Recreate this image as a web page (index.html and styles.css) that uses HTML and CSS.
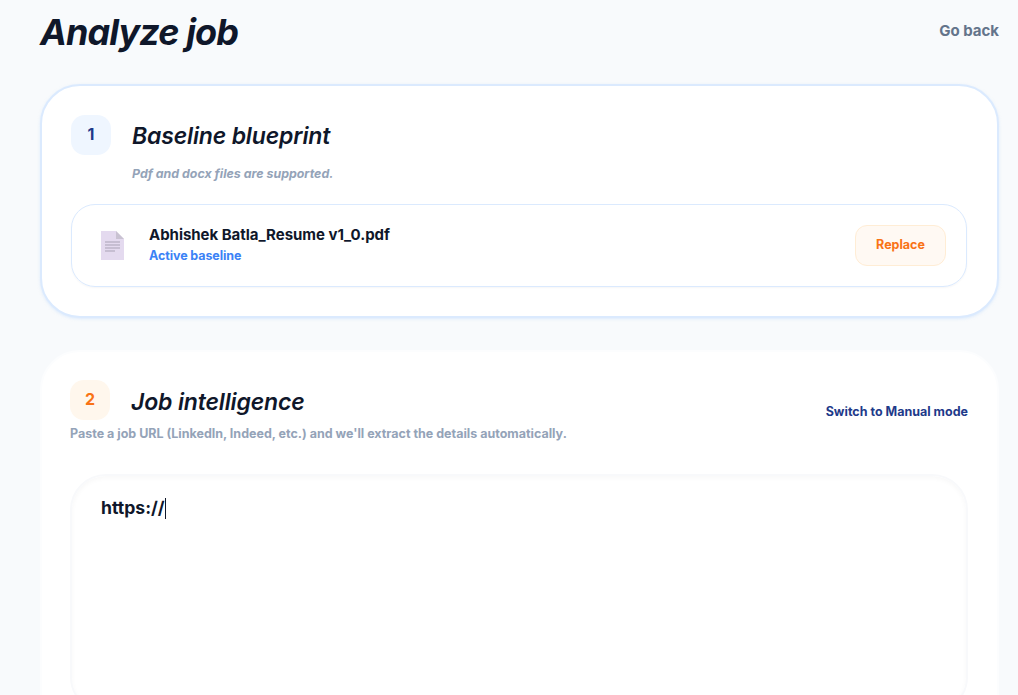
FILE: index.html
```html
<!DOCTYPE html>
<html lang="en">
  <head>
    <meta charset="UTF-8" />
    <meta name="viewport" content="width=device-width, initial-scale=1.0" />
    <link rel="stylesheet" href="styles.css">
    <title>Analyze job</title>
  </head>
  <body class="analyze-page">
    <header class="page-head">
      <h1 class="page-head__title">Analyze job</h1>
      <a class="page-head__back" href="#">Go back</a>
    </header>
    <section class="card card--active">
      <div class="step">
        <span class="step__num">1</span>
        <h2 class="step__title">Baseline blueprint</h2>
      </div>
      <p class="step__hint">Pdf and docx files are supported.</p>
      <div class="file">
        <svg class="file__icon" viewBox="0 0 23 29" aria-hidden="true">
          <path d="M0 0H15L23 8V29H0Z" fill="#e4daef"/>
          <path d="M15 0L23 8H15Z" fill="#c9c2d2"/>
          <path d="M4 11H19M4 14H19M4 17H19M4 20H14" stroke="#a9a2b5" stroke-width="1"/>
        </svg>
        <div class="file__info">
          <p class="file__name">Abhishek Batla_Resume v1_0.pdf</p>
          <p class="file__status">Active baseline</p>
        </div>
        <button type="button" class="file__replace">Replace</button>
      </div>
    </section>
    <section class="card card--job">
      <div class="job-head">
        <div class="step">
          <span class="step__num step__num--orange">2</span>
          <h2 class="step__title step__title--job">Job intelligence</h2>
        </div>
        <a class="job-head__switch" href="#">Switch to Manual mode</a>
      </div>
      <p class="job-hint">Paste a job URL (LinkedIn, Indeed, etc.) and we'll extract the details automatically.</p>
      <div class="url-box">https://<span class="url-box__caret"></span></div>
    </section>
  </body>
</html>
```

FILE: styles.css
```css
* {
  box-sizing: border-box;
}
html,
body {
  height: 695px;
  overflow: hidden;
}
.analyze-page {
  margin: 0;
  padding: 0 19px 0 40px;
  background: #f8fafc;
  font-family: Inter, "Liberation Sans", sans-serif;
  color: #0f172a;
}
.page-head {
  height: 84px;
  display: flex;
  justify-content: space-between;
  align-items: flex-start;
}
.page-head__title {
  margin: 10px 0 0;
  font-size: 36px;
  line-height: 44px;
  font-weight: 700;
  font-style: italic;
  letter-spacing: -0.9px;
}
.page-head__back {
  margin-top: 21px;
  font-size: 15px;
  line-height: 20px;
  font-weight: 700;
  color: #64748b;
  text-decoration: none;
}
.card {
  background: #fff;
  border: 2px solid #fcfdfe;
  border-radius: 40px;
  margin-bottom: 32px;
}
.card--active {
  height: 234px;
  padding: 29px 30px 29px 29px;
  border-color: #dbeafe;
  box-shadow: 0 1px 3px rgba(191, 219, 254, 0.5);
}
.card--job {
  padding: 28px 29px 28px 28px;
}
.step {
  display: flex;
  align-items: center;
  gap: 21px;
}
.step__num {
  width: 40px;
  height: 40px;
  padding-bottom: 2px;
  border-radius: 14px;
  background: #eff6ff;
  color: #1e3a8a;
  font-size: 16px;
  font-weight: 700;
  display: flex;
  align-items: center;
  justify-content: center;
}
.step__num--orange {
  background: #fff7ed;
  color: #f97316;
}
.step__title {
  margin: 2px 0 0;
  font-size: 23px;
  line-height: 28px;
  font-weight: 600;
  font-style: italic;
  letter-spacing: -0.15px;
}
.step__title--job {
  margin-top: 3px;
}
.step__hint {
  margin: 11px 0 0 61px;
  font-size: 12.4px;
  line-height: 16px;
  font-weight: 700;
  font-style: italic;
  color: #94a3b8;
}
.file {
  margin-top: 22px;
  height: 83px;
  border: 1px solid #dbeafe;
  border-radius: 24px;
  padding: 0 20px 0 29px;
  display: flex;
  align-items: center;
  box-shadow: 0 1px 2px rgba(15, 23, 42, 0.04);
}
.file__icon {
  width: 23px;
  height: 29px;
  flex: none;
}
.file__info {
  margin-left: 25px;
  margin-bottom: 3px;
  flex: 1;
}
.file__name {
  margin: 0;
  font-size: 15px;
  line-height: 20px;
  font-weight: 700;
  letter-spacing: -0.03px;
}
.file__status {
  margin: 3px 0 0;
  font-size: 12.5px;
  line-height: 16px;
  font-weight: 700;
  letter-spacing: -0.1px;
  color: #3b82f6;
}
.file__replace {
  width: 91px;
  height: 41px;
  padding: 0 0 2px;
  background: #fff9f3;
  border: 1px solid #ffedd5;
  border-radius: 12px;
  color: #f97316;
  font-family: inherit;
  font-size: 12.5px;
  font-weight: 700;
}
.job-head {
  display: flex;
  justify-content: space-between;
  align-items: flex-start;
}
.job-head__switch {
  margin-top: 24px;
  font-size: 12.5px;
  line-height: 16px;
  font-weight: 700;
  color: #1e3a8a;
  text-decoration: none;
}
.job-hint {
  margin: 6px 0 0;
  font-size: 12.5px;
  line-height: 16px;
  font-weight: 700;
  color: #94a3b8;
}
.url-box {
  margin-top: 32px;
  height: 239px;
  border: 2px solid #f8f9fb;
  border-radius: 36px;
  padding: 20px 29px;
  font-size: 17.6px;
  line-height: 24px;
  font-weight: 700;
  box-shadow: inset 0 2px 5px rgba(15, 23, 42, 0.03);
}
.url-box__caret {
  display: inline-block;
  width: 1px;
  height: 21px;
  background: #0f172a;
  vertical-align: -5px;
}
```
